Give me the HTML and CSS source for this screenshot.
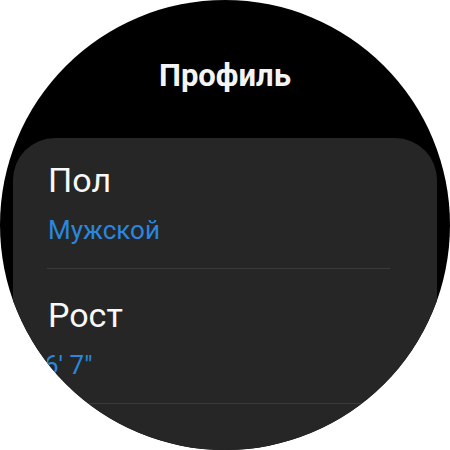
FILE: index.html
```html
<!DOCTYPE html>
<html lang="ru">
<head>
<meta charset="utf-8">
<title>Профиль</title>
<link rel="stylesheet" href="styles.css">
</head>
<body>
<div class="watch">
  <h1 class="title">Профиль</h1>
  <div class="card">
    <div class="row">
      <div class="label">Пол</div>
      <div class="value">Мужской</div>
    </div>
    <div class="row">
      <div class="label">Рост</div>
      <div class="value clip"><span class="scroll">6' 7"</span></div>
    </div>
  </div>
</div>
</body>
</html>
```
FILE: styles.css
```css
html, body {
  margin: 0;
  padding: 0;
  background: #ffffff;
}
body {
  width: 450px;
  height: 450px;
  overflow: hidden;
  font-family: Roboto, "Noto Sans", "Liberation Sans", sans-serif;
}
.watch {
  width: 450px;
  height: 450px;
  border-radius: 50%;
  background: #000000;
  overflow: hidden;
  display: flex;
  flex-direction: column;
}
.title {
  margin: 58px 0 0;
  font-size: 31px;
  line-height: 36px;
  font-weight: 700;
  color: #f4f4f4;
  text-align: center;
}
.card {
  margin: 44px 13px 0;
  background: #262626;
  border-radius: 42px;
  display: flex;
  flex-direction: column;
  flex: 1 0 auto;
}
.row {
  margin: 0 47px 0 34px;
  padding: 26px 0 22px;
  border-bottom: 1px solid #3a3a3a;
  display: flex;
  flex-direction: column;
  gap: 14px;
}
.row:first-child {
  padding-top: 22px;
}
.label {
  font-size: 34px;
  line-height: 40px;
  color: #f8f8f8;
  padding-left: 1px;
}
.value {
  font-size: 26px;
  line-height: 32px;
  color: #2a86df;
  padding-left: 1px;
}
.clip {
  overflow: hidden;
  white-space: nowrap;
}
.scroll {
  display: inline-block;
  margin-left: -4px;
}
```
